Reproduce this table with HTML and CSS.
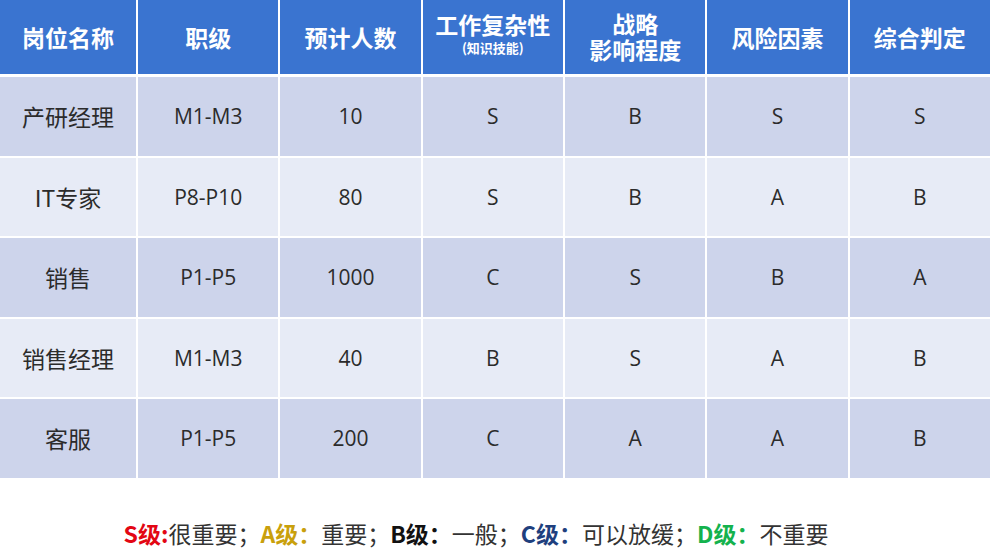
FILE: index.html
```html
<!DOCTYPE html>
<html lang="zh-CN">
<head>
<meta charset="utf-8">
<title>岗位评估</title>
<link rel="stylesheet" href="styles.css">
</head>
<body>
<div class="sheet">
  <div class="grid head">
    <div class="cell">岗位名称</div>
    <div class="cell">职级</div>
    <div class="cell">预计人数</div>
    <div class="cell stack"><span class="main">工作复杂性</span><span class="sub">(知识技能)</span></div>
    <div class="cell stack"><span>战略</span><span>影响程度</span></div>
    <div class="cell">风险因素</div>
    <div class="cell">综合判定</div>
  </div>
  <div class="grid body">
    <div class="cell dark name">产研经理</div><div class="cell dark">M1-M3</div><div class="cell dark">10</div><div class="cell dark">S</div><div class="cell dark">B</div><div class="cell dark">S</div><div class="cell dark">S</div>
    <div class="cell light name">IT专家</div><div class="cell light">P8-P10</div><div class="cell light">80</div><div class="cell light">S</div><div class="cell light">B</div><div class="cell light">A</div><div class="cell light">B</div>
    <div class="cell dark name">销售</div><div class="cell dark">P1-P5</div><div class="cell dark">1000</div><div class="cell dark">C</div><div class="cell dark">S</div><div class="cell dark">B</div><div class="cell dark">A</div>
    <div class="cell light name">销售经理</div><div class="cell light">M1-M3</div><div class="cell light">40</div><div class="cell light">B</div><div class="cell light">S</div><div class="cell light">A</div><div class="cell light">B</div>
    <div class="cell dark name">客服</div><div class="cell dark">P1-P5</div><div class="cell dark">200</div><div class="cell dark">C</div><div class="cell dark">A</div><div class="cell dark">A</div><div class="cell dark">B</div>
  </div>
  <p class="legend"><b class="s">S级:</b>很重要；<b class="a">A级：</b>重要；<b class="b">B级：</b>一般；<b class="c">C级：</b>可以放缓；<b class="d">D级：</b>不重要</p>
</div>
</body>
</html>
```
FILE: styles.css
```css
html, body {
  margin: 0;
  padding: 0;
  background: #ffffff;
}
body {
  width: 990px;
  font-family: "Open Sans", "Noto Sans CJK SC", sans-serif;
  color: #2b2b2b;
}
.grid {
  display: grid;
  grid-template-columns: 136px repeat(6, 1fr);
  column-gap: 2px;
}
.head {
  grid-template-rows: 74px;
  margin-bottom: 3px;
}
.body {
  grid-template-rows: repeat(5, 78.5px);
  row-gap: 2px;
}
.cell {
  display: flex;
  align-items: center;
  justify-content: center;
  font-size: 21px;
}
.cell.name {
  font-size: 23px;
  font-family: "Noto Sans CJK SC", sans-serif;
}
.head .cell {
  background: #3a74d0;
  color: #ffffff;
  font-weight: 700;
  font-size: 23px;
  font-family: "Noto Sans CJK SC", sans-serif;
}
.stack {
  flex-direction: column;
  line-height: 26px;
  padding-bottom: 2px;
}
.stack .main {
  line-height: 24px;
  margin-top: -4px;
}
.stack .sub {
  font-size: 13px;
  line-height: 16px;
  margin-top: 4px;
}
.dark { background: #cdd4eb; }
.light { background: #e7ebf6; }
.legend {
  margin: 40px 0 0;
  padding-right: 38px;
  text-align: center;
  font-size: 23px;
  line-height: 30px;
  font-family: "Noto Sans CJK SC", sans-serif;
  color: #333333;
}
.legend b { font-weight: 700; }
.legend .s { color: #e30613; }
.legend .a { color: #c9a00c; }
.legend .b { color: #111111; }
.legend .c { color: #1f3f7e; }
.legend .d { color: #14b24d; }
```
